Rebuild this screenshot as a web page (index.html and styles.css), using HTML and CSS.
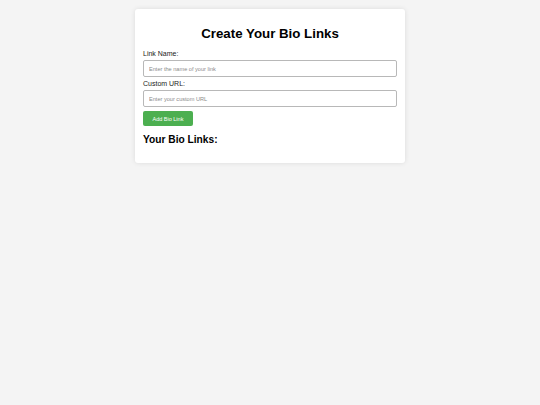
FILE: index.html
```html
<!DOCTYPE html>
<html lang="en">
<head>
    <meta charset="UTF-8">
    <meta name="viewport" content="width=device-width, initial-scale=1.0">
    <title>Bio Links</title>
    <link rel="stylesheet" href="styles.css">
</head>
<body>

<div class="container">
    <h1>Create Your Bio Links</h1>
    <form id="bio-form">
        <label for="link-name">Link Name:</label>
        <input type="text" id="link-name" placeholder="Enter the name of your link">
        <label for="link-url">Custom URL:</label>
        <input type="text" id="link-url" placeholder="Enter your custom URL">
        <button type="submit" class="btn">Add Bio Link</button>
    </form>
    <h2>Your Bio Links:</h2>
    <ul id="bio-list"></ul>
</div>

</body>
</html>
```

FILE: styles.css
```css
body {
    font-family: "Liberation Sans", Arial, sans-serif;
    background-color: #f4f4f4;
    margin: 0;
    padding: 9px 0;
}

.container {
    width: 270px;
    margin: 0 auto;
    background-color: #ffffff;
    padding: 8px;
    box-sizing: border-box;
    border-radius: 3px;
    box-shadow: 0px 0px 5px rgba(0, 0, 0, 0.1);
}

.container h1 {
    text-align: center;
    font-size: 13.3px;
    line-height: 15px;
    color: #000000;
    margin: 9px 0 9px;
}

.container label {
    display: block;
    font-size: 7px;
    line-height: 8px;
    color: #1a1a1a;
    margin-bottom: 2px;
}

.container input {
    display: block;
    width: 100%;
    height: 17px;
    padding: 0 5px;
    margin-bottom: 3px;
    border: 1px solid #b8b8b8;
    border-radius: 2px;
    box-sizing: border-box;
    font-family: inherit;
    font-size: 5.6px;
}

.container input::placeholder {
    color: #8a8a8a;
}

.btn {
    display: block;
    margin-top: 4px;
    background-color: #4caf50;
    color: #ffffff;
    border: none;
    border-radius: 2px;
    height: 15px;
    padding: 0 9.5px;
    font-family: inherit;
    font-size: 5.5px;
    cursor: pointer;
}

.container h2 {
    font-size: 10.2px;
    line-height: 12px;
    color: #000000;
    margin: 8px 0 0;
}

#bio-list {
    margin: 0;
    padding: 0;
    height: 9px;
}
```
